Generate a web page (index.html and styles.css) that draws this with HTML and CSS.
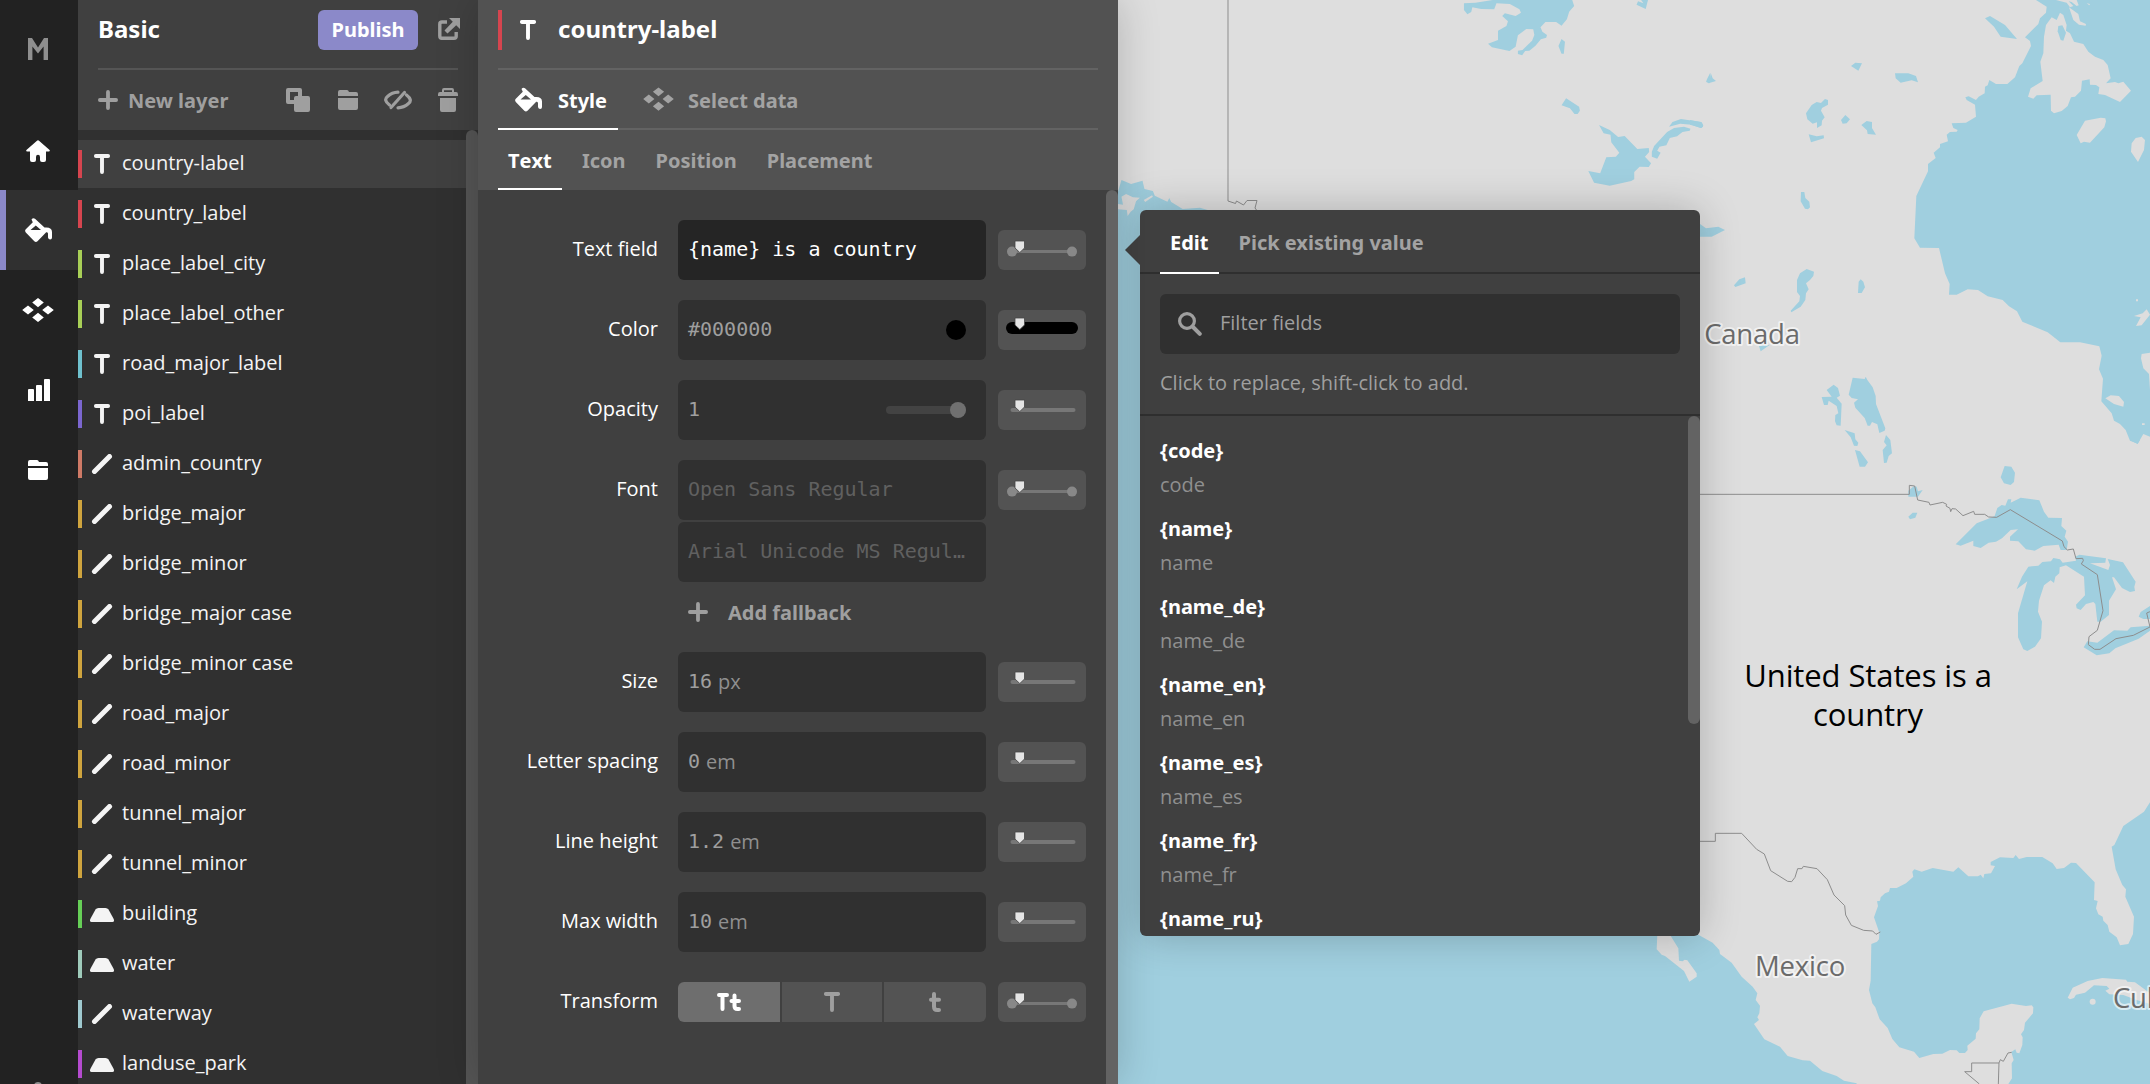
FILE: index.html
```html
<!DOCTYPE html>
<html lang="en">
<head>
<meta charset="utf-8">
<title>Basic – style editor</title>
<link rel="stylesheet" href="styles.css">
</head>
<body>
<svg class="defs" width="0" height="0" aria-hidden="true">
  <symbol id="i-home" viewBox="0 0 24 22"><path d="M12 0.2Q12.600.2 13.300.9L23.300 9.700q1.300 1.500-.5 1.800H20V20q0 2-2 2H16q-2 0-2-2V17q0-2.200-2-2.200t-2 2.200v3q0 2-2 2H6q-2 0-2-2V11.500H1.200q-1.800-.3-.5-1.800L10.700.9Q11.400.2 12 .2Z"/></symbol>
  <symbol id="i-bucket" viewBox="0 0 27 24"><path fill-rule="evenodd" d="M6.500 1.500Q8-.5 10 .8L19.500 9.500Q27 8.700 27 14V19.500q0 2-1.800 2T23 19.500V15.500q-.4-1.500-1.800-1.200L12.500 23.200q-1.600 1.500-3.200 0L.8 14.500Q-.6 12.800.8 11.200L7.800 4.300ZM10.800 7.500 5.500 12H16Z"/></symbol>
  <symbol id="i-data" viewBox="0 0 32 24"><path d="m16 0 5.800 4.600L16 9.200 10.200 4.600ZM6 7.400 11.800 12 6 16.600.2 12ZM26 7.400 31.800 12 26 16.600 20.200 12ZM16 14.800l5.800 4.600L16 24l-5.800-4.600Z"/></symbol>
  <symbol id="i-chart" viewBox="0 0 22 22"><path d="M1 10h4q1 0 1 1V22H0V11q0-1 1-1ZM9 6h4q1 0 1 1V22H8V7q0-1 1-1ZM17 0h4q1 0 1 1V22H16V1q0-1 1-1Z"/></symbol>
  <symbol id="i-folder" viewBox="0 0 20 20"><path d="M0 6V2Q0 0 2 0H9q1.300 0 2 1.900H18q2 0 2 2V6ZM0 8H20V18q0 2-2 2H2q-2 0-2-2Z"/></symbol>
  <symbol id="i-plus" viewBox="0 0 20 20"><path d="M10 1.900V18.100M1.900 10H18.100" stroke="currentColor" stroke-width="3.800" stroke-linecap="round"/></symbol>
  <symbol id="i-copy" viewBox="0 0 24 24"><path fill-rule="evenodd" d="M2 0H14q2 0 2 2V8H12V4H4V12H8v4H2q-2 0-2-2V2Q0 0 2 0ZM10 8H22q2 0 2 2V22q0 2-2 2H10q-2 0-2-2V10Q8 8 10 8Z"/></symbol>
  <symbol id="i-hide" viewBox="0 0 28 20"><g fill="none" stroke="currentColor" stroke-width="3.200" stroke-linecap="round"><path d="M5.500 15Q-1 10 3.500 6.500 8 2.400 14 2.200"/><path d="M22.500 5Q29 10 24.500 13.500 20 17.600 14 17.800"/><path d="M7 17.500 20.500 2.500"/></g></symbol>
  <symbol id="i-trash" viewBox="0 0 20 24"><path fill-rule="evenodd" d="M6 0H14q2 0 2 2V4h2q2 0 2 2.200V8H0V6.200Q0 4 2 4H4V2Q4 0 6 0ZM6 2.200V4h8V2.200ZM2 10H18V22q0 2-2 2H4q-2 0-2-2Z"/></symbol>
  <symbol id="i-share" viewBox="0 0 22 22"><path d="M9 4H4Q1.800 4 1.800 6V18q0 2.200 2 2.200H16q2.200 0 2.200-2V14" fill="none" stroke="currentColor" stroke-width="3.400"/><path d="M11 0H22V11L18.200 7.200 9.500 15.500 6.500 12.500 14.800 3.800Z"/></symbol>
  <symbol id="i-type" viewBox="0 0 16 20"><path d="M1.900 2H14.100M8 2V18" stroke="currentColor" stroke-width="3.900" stroke-linecap="round"/></symbol>
  <symbol id="i-line" viewBox="0 0 20 20"><path d="M2.500 17.500 17.500 2.500" stroke="currentColor" stroke-width="5" stroke-linecap="round"/></symbol>
  <symbol id="i-fill" viewBox="0 0 24 14"><path d="M8.500 0h7q2 0 3 1.500l5.200 9.500q1 2.700-1.200 3H1.500q-2.200-.3-1.200-3l5.200-9.500q1-1.500 3-1.500Z"/></symbol>
  <symbol id="i-search" viewBox="0 0 24 24"><g fill="none" stroke="currentColor" stroke-width="3.200" stroke-linecap="round"><circle cx="9" cy="9" r="7.400"/><path d="m14.500 14.500 7.300 7.300" stroke-width="4"/></g></symbol>
  <symbol id="i-lower" viewBox="0 0 12 20"><path d="M5 2V14.500q0 3.500 3.200 3.500H10M2 7.800H10" fill="none" stroke="currentColor" stroke-width="4" stroke-linecap="round"/></symbol>
  <symbol id="i-mixed" viewBox="0 0 24 18"><path d="M2 2H10M5.500 2V16M17.500 2.500V13q0 3 3 3H22M14.500 8H22" fill="none" stroke="currentColor" stroke-width="4" stroke-linecap="round"/></symbol>
  <symbol id="i-logo" viewBox="0 0 20 22"><path d="M0 22V0H4L10 9.500 16 0H20V22H15.600V8.500L10 15.500 4.400 8.500V22Z"/></symbol>
  <symbol id="z-line" viewBox="0 0 88 40"><rect x="12.500" y="18" width="65" height="4" rx="2" fill="#777"/><path d="M17 10H26.500V17L21.800 21.500 17 17Z" fill="#e4e4e4" stroke="#444" stroke-width=".8"/></symbol>
  <symbol id="z-stops" viewBox="0 0 88 40"><rect x="14" y="20" width="60" height="3" fill="#777"/><circle cx="14" cy="21.600" r="5" fill="#888"/><circle cx="74" cy="21.600" r="5" fill="#888"/><path d="M17 11H26.500V18L21.800 22.500 17 18Z" fill="#e4e4e4" stroke="#444" stroke-width=".8"/></symbol>
  <symbol id="z-color" viewBox="0 0 88 40"><rect x="8" y="12" width="72" height="12" rx="6" fill="#000"/><path d="M17 8H26.500V15L21.800 19.500 17 15Z" fill="#e4e4e4" stroke="#444" stroke-width=".8"/></symbol>
</svg>

<div class="app">
  <nav class="rail">
    <a class="rail-item logo"><svg width="20" height="22"><use href="#i-logo"/></svg></a>
    <a class="rail-item home"><svg width="24" height="22"><use href="#i-home"/></svg></a>
    <a class="rail-item active"><svg width="27" height="24"><use href="#i-bucket"/></svg></a>
    <a class="rail-item"><svg width="32" height="24"><use href="#i-data"/></svg></a>
    <a class="rail-item chart"><svg width="22" height="22"><use href="#i-chart"/></svg></a>
    <a class="rail-item"><svg width="20" height="20"><use href="#i-folder"/></svg></a>
    <span class="rail-dot"></span>
  </nav>

  <section class="layers">
    <header class="layers-head">
      <div class="title-row">
        <h1>Basic</h1>
        <button class="publish">Publish</button>
        <svg class="muted" width="22" height="22"><use href="#i-share"/></svg>
      </div>
      <div class="tools muted">
        <svg width="20" height="20"><use href="#i-plus"/></svg>
        <span class="new-layer">New layer</span>
        <svg class="t-copy" width="24" height="24"><use href="#i-copy"/></svg>
        <svg class="t-folder" width="20" height="20"><use href="#i-folder"/></svg>
        <svg class="t-hide" width="28" height="20"><use href="#i-hide"/></svg>
        <svg width="20" height="24"><use href="#i-trash"/></svg>
      </div>
    </header>
    <div class="layers-body">
      <ul class="layer-list">
        <li class="selected red"><svg><use href="#i-type"/></svg>country-label</li>
        <li class="red"><svg><use href="#i-type"/></svg>country_label</li>
        <li class="lime"><svg><use href="#i-type"/></svg>place_label_city</li>
        <li class="lime"><svg><use href="#i-type"/></svg>place_label_other</li>
        <li class="cyan"><svg><use href="#i-type"/></svg>road_major_label</li>
        <li class="violet"><svg><use href="#i-type"/></svg>poi_label</li>
        <li class="coral"><svg><use href="#i-line"/></svg>admin_country</li>
        <li class="gold"><svg><use href="#i-line"/></svg>bridge_major</li>
        <li class="gold"><svg><use href="#i-line"/></svg>bridge_minor</li>
        <li class="gold"><svg><use href="#i-line"/></svg>bridge_major case</li>
        <li class="gold"><svg><use href="#i-line"/></svg>bridge_minor case</li>
        <li class="gold"><svg><use href="#i-line"/></svg>road_major</li>
        <li class="gold"><svg><use href="#i-line"/></svg>road_minor</li>
        <li class="gold"><svg><use href="#i-line"/></svg>tunnel_major</li>
        <li class="gold"><svg><use href="#i-line"/></svg>tunnel_minor</li>
        <li class="green"><svg class="fill"><use href="#i-fill"/></svg>building</li>
        <li class="mint"><svg class="fill"><use href="#i-fill"/></svg>water</li>
        <li class="sky"><svg><use href="#i-line"/></svg>waterway</li>
        <li class="magenta"><svg class="fill"><use href="#i-fill"/></svg>landuse_park</li>
      </ul>
      <div class="scrollbar"></div>
    </div>
  </section>

  <section class="props">
    <header class="props-head">
      <div class="props-title">
        <svg width="16" height="20"><use href="#i-type"/></svg>
        <h2>country-label</h2>
      </div>
      <div class="tabs main-tabs">
        <a class="tab on"><span class="tab-icon"><svg width="27" height="25"><use href="#i-bucket"/></svg></span>Style</a>
        <a class="tab"><span class="tab-icon"><svg width="31" height="24"><use href="#i-data"/></svg></span>Select data</a>
      </div>
      <div class="tabs sub-tabs">
        <a class="tab on">Text</a>
        <a class="tab">Icon</a>
        <a class="tab">Position</a>
        <a class="tab">Placement</a>
      </div>
    </header>
    <div class="props-body">
      <div class="form">
        <div class="row"><label>Text field</label><div class="input focus">{name} is a country</div><span class="zoomer"><svg><use href="#z-stops"/></svg></span></div>
        <div class="row"><label>Color</label><div class="input">#000000<i class="swatch"></i></div><span class="zoomer"><svg><use href="#z-color"/></svg></span></div>
        <div class="row"><label>Opacity</label><div class="input">1<i class="slider"><b></b></i></div><span class="zoomer"><svg><use href="#z-line"/></svg></span></div>
        <div class="row tall"><label>Font</label>
          <div class="stack">
            <div class="input dim">Open Sans Regular</div>
            <div class="input dim">Arial Unicode MS Regul…</div>
            <div class="fallback"><svg width="20" height="20"><use href="#i-plus"/></svg>Add fallback</div>
          </div>
          <span class="zoomer"><svg><use href="#z-stops"/></svg></span></div>
        <div class="row"><label>Size</label><div class="input">16<em>px</em></div><span class="zoomer"><svg><use href="#z-line"/></svg></span></div>
        <div class="row"><label>Letter spacing</label><div class="input">0<em>em</em></div><span class="zoomer"><svg><use href="#z-line"/></svg></span></div>
        <div class="row"><label>Line height</label><div class="input">1.2<em>em</em></div><span class="zoomer"><svg><use href="#z-line"/></svg></span></div>
        <div class="row"><label>Max width</label><div class="input">10<em>em</em></div><span class="zoomer"><svg><use href="#z-line"/></svg></span></div>
        <div class="row"><label>Transform</label>
          <div class="segments">
            <button class="on"><svg width="24" height="18"><use href="#i-mixed"/></svg></button>
            <button><svg width="16" height="20"><use href="#i-type"/></svg></button>
            <button><svg width="12" height="20"><use href="#i-lower"/></svg></button>
          </div>
          <span class="zoomer"><svg><use href="#z-stops"/></svg></span></div>
      </div>
      <div class="scrollbar light"></div>
    </div>
  </section>

  <main class="map">
    <svg class="map-canvas" viewBox="1118 0 1032 1084" width="1032" height="1084">
      <rect x="1118" y="0" width="1032" height="1084" fill="#dedede"/>
      <!-- northern lakes and Pacific coast -->
      <g transform="translate(1110 0) scale(.38265 .33333)">
        <g class="water">
          <path d="M925 10 955 8 1000 0H1208L1213 18 1200 35 1194 58 1180 77 1166 66H1138L1125 82 1130 95 1142 105 1140 113 1126 118 1112 137 1096 152 1085 153 1077 166 1066 162V152L1078 150 1092 134 1103 122 1109 105 1106 88 1088 87 1066 106 1060 140 1044 153 998 142 988 131 1014 120V92L1036 78 1040 64 1025 48 1032 40 1060 48 1074 38 1070 28 1045 12 1010 10 1004 28 970 27 947 22 944 36 934 43 925 30Z"/>
          <path d="M1180 117 1189 125 1186 161H1180L1172 138ZM1388 0H1406L1400 27 1376 14 1380 4 1394 10ZM1192 295 1226 320 1228 332 1222 342H1214L1202 325 1180 316Z"/>
          <path d="M1278 375 1306 390 1328 411 1345 408 1378 447 1408 444 1409 456 1398 470 1414 490 1408 501 1384 500 1370 516V538L1362 543 1306 557 1265 548 1250 513 1281 520 1297 472 1322 470 1331 458 1310 427 1308 404 1290 400Z"/>
          <path d="M1461 380 1470 366 1492 357 1545 366 1550 380 1543 384 1520 374 1490 371ZM1416 455 1422 438 1456 396 1474 384 1500 380 1517 386 1515 392 1496 396 1482 409 1463 414 1454 436 1436 440 1430 452 1439 458 1430 476 1416 470ZM1568 220 1560 238 1558 246 1568 250Z"/>
          <path d="M21 575 30 540 55 552 85 542 90 567 112 573 117 587 150 605 155 594 160 606 190 627 235 623 262 632H300L900 1100 1200 1900 1500 2200V2800L21 2900Z"/>
        </g>
        <path class="land" d="M30 590 42 582 60 592 78 593 68 604 62 628 54 635 46 648 44 630 21 628V612L34 614ZM88 600 110 586 112 590 92 606Z"/>
      </g>
      <!-- Hudson Bay and central lakes -->
      <g transform="translate(1690 0) scale(.33333)">
        <g class="water">
          <path d="M1038 0 1070 20 1068 38 1050 55 1045 72 1005 112 1020 123 1023 138 997 190 988 198 975 232 952 252H918L898 240 893 256 885 260 884 280 866 290 858 300 836 289 826 292 830 300 855 314 858 350 828 368 785 370 790 384 803 390 800 395 780 396 770 404 774 424 750 432V442L731 458 737 474 714 492V514L679 588 673 715 690 743 747 744 765 820 779 852 777 884H800L833 868 864 870 893 889 938 900 957 919 981 934 997 965 1073 997 1111 1027H1170L1228 1039 1235 1067 1227 1108 1239 1136 1234 1204 1265 1240 1272 1262 1290 1272 1307 1290 1320 1322 1343 1331 1360 1302 1380 1310V0Z"/>
          <path d="M885 55 900 48 945 75 981 117 932 110 912 80ZM483 198 496 188 516 190 505 212ZM615 220H655L678 228 684 247 665 241 632 248 617 235ZM62 218 68 235 78 243 55 250 49 243 60 235ZM0 360 35 367 40 376 35 384 0 374Z"/>
          <path d="M348 340 365 315 380 306 393 309 405 297 414 300V314L396 324 393 332 404 352 396 362 395 376 381 384V367L368 371 352 358ZM453 360 466 345 480 358 470 370 458 371ZM514 375 530 363 546 366V384L558 404 533 402 531 391ZM356 403 380 409 401 406 402 415 363 427ZM333 576H343L346 594 358 605 360 622 354 628 345 626 332 604ZM30 672 48 685 85 680 105 690 65 710H0ZM132 856 148 838 165 832 167 850 136 861Z"/>
          <path d="M350 807 372 815 370 828 360 840 348 850 356 868 348 880 346 900 332 920 304 937 302 932 328 904 330 888 321 876V840L330 820ZM512 838 520 845 525 862 515 879H504L506 845ZM207 1038 240 1034 212 1054Z"/>
          <path d="M488 1133 524 1137 527 1130 532 1140 548 1162 557 1188 558 1212 586 1285 584 1292 568 1299 562 1273 546 1266 540 1277H533L524 1254 496 1223 492 1208 504 1198 485 1194 476 1184ZM410 1170 431 1154 444 1164 450 1187 440 1193 455 1211 452 1277 440 1276 435 1264 436 1245 445 1240 440 1218 416 1202 413 1215H402L395 1191 425 1190ZM464 1290 494 1300 496 1318 505 1328 502 1338 492 1337 482 1312ZM495 1350 510 1354 534 1387 525 1400H509ZM588 1305 601 1320 606 1360 596 1368 590 1388 582 1389 578 1350 590 1336 582 1326Z"/>
        </g>
        <g class="land">
          <path d="M1085 52 1100 60 1110 38 1120 45 1130 75 1128 92 1140 100 1152 125 1180 132 1195 155 1215 170 1240 180 1253 195 1262 235 1248 250 1275 246 1285 250 1300 245 1323 272 1290 306 1245 285 1225 282 1228 262 1218 255 1200 254 1199 238 1176 242 1173 272 1155 290 1143 292 1133 318 1115 333 1092 340 1083 332 1082 284 1040 286 1030 296 1014 290 1022 265 1058 243 1051 185 1060 160 1062 110 1068 75Z"/>
          <path d="M1098 0 1130 8 1140 22 1150 18 1136 4 1145 6 1160 18 1166 16 1160 0ZM1137 22 1165 42 1170 64 1188 72 1187 77 1167 74 1150 60ZM1190 10 1200 12 1198 16Z"/>
          <path d="M1185 362 1232 353 1246 355 1248 364 1243 382 1200 428 1182 425 1172 430 1160 405ZM1337 414 1355 410 1365 420 1362 450 1344 486 1323 455 1325 430ZM1370 928 1380 944 1355 976 1338 978 1352 952 1332 948 1358 940ZM1338 898h6v6h-6ZM1380 1058 1355 1062 1353 1075 1360 1105 1377 1122 1380 1170ZM1246 1195 1262 1186 1287 1188 1302 1206 1300 1220 1272 1212ZM1356 1270h8v5h-8Z"/>
        </g>
        <path class="water" d="M1105 78 1117 76 1128 98 1120 122 1112 120 1103 94Z"/>
      </g>
      <!-- Great Lakes -->
      <g transform="translate(1690 440) scale(.33333)">
        <g class="water">
          <path d="M944 78 964 80 975 98 972 126 962 135 942 130 932 112ZM655 152 672 138 680 140 684 154 698 150 684 170 655 170ZM655 230 668 218 682 218 676 233 660 238ZM1320 0H1350L1343 12Z"/>
          <path d="M797 313 860 250 895 236 914 228 922 204 935 195 946 197 954 178 964 178 962 188 992 173 1048 181 1062 215 1075 233 1116 234 1114 258 1129 272 1124 290 1134 305 1130 330H1112L1106 314 1060 318 1034 332 1008 328 985 304 960 302V290L984 268 962 270 936 295 918 305 896 308 872 324 850 318V302L812 317Z"/>
          <path d="M980 448 996 410 1015 380 1045 377 1057 366 1083 364 1090 354 1110 358 1118 368 1158 362 1156 350 1168 344 1248 355 1246 368 1200 370 1255 390 1260 375 1253 357 1299 367 1337 425 1333 440 1335 453 1320 456 1296 444 1272 412H1266L1278 448 1257 482V525L1232 545H1222L1216 492 1210 486 1188 492 1172 510 1160 505 1158 494 1185 466 1182 410 1128 376 1109 382 1108 400 1096 410 1092 429 1082 421 1062 436 1047 482 1044 515 1056 545 1053 595 1035 620 1012 633 1000 628 984 592V520L1012 424Z"/>
          <path d="M1181 622 1192 604 1222 608 1272 571 1312 572 1322 562 1380 557V572L1346 596 1276 625 1258 640 1220 646ZM1380 498 1352 516 1346 530 1360 537H1380Z"/>
        </g>
        <path class="border" d="M0 163H658V136L674 138 683 180 717 187 720 195 758 187 770 193 768 198 780 205 782 215 786 206 797 207 819 227 851 214 854 223H884L896 231 920 232 961 209 1117 303 1122 320 1132 330 1150 327 1158 356 1178 355 1180 362 1174 372 1222 404 1239 512 1222 571 1197 590 1195 614 1214 628H1230L1278 596 1330 586 1380 561 1370 519 1380 515"/>
      </g>
      <!-- Mexico, Gulf, Caribbean -->
      <g transform="translate(1640 800) scale(.33333)">
        <g class="water">
          <path d="M1530 7 1512 35 1450 78 1423 135 1415 140 1427 208 1447 255 1458 268 1456 290 1482 350 1479 402 1465 432 1440 436 1430 412 1408 395 1403 375 1390 362 1388 350 1375 343 1368 325 1373 303 1362 300 1364 247 1308 189 1293 188 1272 204 1250 207 1238 190 1207 171H1160L1137 177 1127 165 1120 174 1080 172 1052 186V196L1065 198 1053 220 1033 222 1030 235 1022 224 1014 229H985L955 202 940 215 878 204 845 215 823 208 817 215 820 230 798 250 770 264H750L747 275 735 280 722 292 720 302 711 304 714 318 702 352 718 398 717 418 711 425 694 432 692 542 687 570 697 610 706 622 719 658 743 684 757 717 778 742 822 755 838 774 880 762 907 761 930 750 950 751 958 759H975L983 750 982 737 1007 716 1008 700 1018 688 1019 655 1031 634 1115 611 1158 618 1175 616 1180 622 1179 640 1155 668 1152 690 1143 703 1148 712 1147 735 1138 760 1130 758 1126 748 1114 756 1121 780 1115 790 1116 835 1105 852H1530Z"/>
          <path d="M100 370 175 404 218 428 238 450 240 462 275 488 305 530 338 560 352 580 347 600 360 617 358 640 352 652 357 660 342 672 373 718 420 740 443 768 488 781 510 782 547 813 590 828 612 842 650 850V852H-1570V370Z"/>
        </g>
        <g class="land">
          <path d="M53 380H75L115 445 117 482 128 484 134 479 142 481 170 520V530L148 545 132 513 75 468 65 464 50 448Z"/>
          <path d="M1283 593 1298 563 1343 543 1387 534 1458 539 1462 545 1485 547 1530 580V612L1490 600 1450 585 1408 583 1396 572 1408 566 1400 558 1362 556 1335 578 1308 584 1302 594 1290 598Z"/>
          <circle cx="1358" cy="605" r="9"/>
        </g>
        <path class="border" d="M150 124H226V100H305L350 148 373 162 392 212 443 244 455 245 465 232 473 206H486L490 199 531 206 562 239 582 285 614 317 617 345 634 376 671 391 698 393 708 403 721 396M1115 757 1104 759 1090 784 1081 779 1077 789H995V815H974L1018 852M1077 789 1075 852"/>
      </g>
      <path class="border" d="M1228 0V201L1235.500 203.500 1236.500 201 1243.500 205 1247 200.500H1257L1255 208 1258 212"/>
      <g class="place">
        <text x="1752" y="344">Canada</text>
        <text x="1800" y="976">Mexico</text>
        <text class="left" x="2113" y="1008">Cuba</text>
      </g>
      <g class="country"><text x="1868" y="687">United States is a</text><text x="1868" y="725.500">country</text></g>
    </svg>

    <aside class="popup">
      <div class="tabs popup-tabs">
        <a class="tab on">Edit</a>
        <a class="tab">Pick existing value</a>
      </div>
      <div class="popup-search">
        <div class="search"><svg width="24" height="24"><use href="#i-search"/></svg>Filter fields</div>
        <p>Click to replace, shift-click to add.</p>
      </div>
      <div class="popup-body">
        <dl>
          <dt>{code}</dt><dd>code</dd>
          <dt>{name}</dt><dd>name</dd>
          <dt>{name_de}</dt><dd>name_de</dd>
          <dt>{name_en}</dt><dd>name_en</dd>
          <dt>{name_es}</dt><dd>name_es</dd>
          <dt>{name_fr}</dt><dd>name_fr</dd>
          <dt>{name_ru}</dt>
        </dl>
        <div class="scrollbar light short"></div>
      </div>
    </aside>
  </main>
</div>
</body>
</html>
```
FILE: styles.css
```css
* { box-sizing: border-box; margin: 0; padding: 0; }

body {
  width: 2150px;
  height: 1084px;
  overflow: hidden;
  font: 20px/28px "Open Sans", "Noto Sans", sans-serif;
  color: #fff;
}

svg { display: block; flex: none; fill: currentColor; }
.defs { position: absolute; }
button { font: inherit; color: inherit; border: 0; }
h1, h2, .publish, .new-layer, .tabs, .fallback, dt { font-family: "Noto Sans", "Open Sans", sans-serif; font-weight: 700; }
.muted { color: #9f9f9f; }

.app { display: flex; height: 1084px; }

/* navigation rail */
.rail { width: 78px; background: #222; display: flex; flex-direction: column; overflow: hidden; }
.rail-item { flex: none; height: 80px; display: flex; align-items: center; justify-content: center; padding: 0 2px 0 0; }
.rail-item.home { padding-top: 2px; }
.rail-item.chart { padding: 0; }
.rail-item.logo { height: 110px; padding-bottom: 12px; color: #8f8f8f; }
.rail-item.active { background: #303030; border-left: 6px solid #8b89c9; padding-right: 7px; }
.rail-dot { width: 8px; height: 8px; margin: 572px 0 0 34px; border-radius: 50%; background: #8f8f8f; flex: none; }

/* scrollbars */
.scrollbar { width: 12px; flex: none; background: #555; border-radius: 6px 6px 0 0; }
.scrollbar.light { background: #636363; }
.scrollbar.short { height: 308px; border-radius: 6px; }

/* layer list */
.layers { width: 400px; display: flex; flex-direction: column; background: #404040; }
.layers-head { height: 130px; padding: 0 20px; }
.title-row { height: 70px; padding: 10px 0 18px; border-bottom: 2px solid #555; display: flex; align-items: center; }
.title-row h1 { font-size: 24px; flex: 1; padding-bottom: 3px; }
.title-row svg { margin: -2px -2px 0 20px; }
.publish { width: 100px; height: 40px; border-radius: 6px; background: #8b89c9; }
.tools { height: 60px; display: flex; align-items: center; }
.new-layer { flex: 1; margin-left: 10px; padding-top: 1px; }
.t-copy { margin-right: 28px; }
.t-folder { margin-right: 26px; }
.t-hide { margin-right: 26px; }
.layers-body { flex: 1; min-height: 0; display: flex; background: #303030; }
.layer-list { flex: 1; list-style: none; padding-top: 10px; display: flex; flex-direction: column; gap: 2px; overflow: hidden; }
.layer-list li {
  flex: none;
  height: 48px;
  padding-bottom: 3px;
  display: flex;
  align-items: center;
  gap: 8px;
  background: linear-gradient(var(--tag), var(--tag)) 0 10px / 4px 28px no-repeat;
  color: #f4f4f4;
}
.layer-list li.selected { background-color: #404040; }
.layer-list svg { width: 24px; height: 20px; margin: 3px 0 0 12px; }
.layer-list svg.fill { height: 14px; margin-top: 4px; }
.red { --tag: #d6454f; }
.lime { --tag: #a8cf57; }
.cyan { --tag: #6fc1ce; }
.violet { --tag: #7b66cf; }
.coral { --tag: #cf7a66; }
.gold { --tag: #cfa43e; }
.green { --tag: #66cf57; }
.mint { --tag: #9fcbbb; }
.sky { --tag: #9fc9cf; }
.magenta { --tag: #b54bcf; }

/* property panel */
.props { width: 640px; display: flex; flex-direction: column; background: #404040; position: relative; z-index: 1; box-shadow: 0 0 40px rgba(0, 0, 0, .2); }
.props-head { height: 190px; padding: 0 20px; background: #525252; }
.props-title { height: 70px; padding: 10px 0 18px; border-bottom: 2px solid #636363; display: flex; align-items: stretch; }
.props-title::before { content: ""; width: 4px; background: #d6454f; }
.props-title svg { align-self: center; margin: 0 22px 0 18px; }
.props-title h2 { font-size: 24px; line-height: 37px; }
.tabs { display: flex; gap: 10px; height: 60px; }
.tab { display: flex; align-items: center; padding: 3px 10px 0; color: #a3a3a3; border-bottom: 2px solid transparent; line-height: 28px; }
.tab.on { color: #fff; border-color: #fff; }
.tab-icon { width: 40px; margin: -3px 10px 0 0; display: flex; justify-content: center; }
.main-tabs { background: linear-gradient(#636363, #636363) 0 100% / 100% 2px no-repeat; }
.main-tabs .on { width: 120px; }
.sub-tabs .on { width: 64px; font-kerning: none; }
.props-body { flex: 1; min-height: 0; display: flex; }
.form { flex: 1; padding: 30px 0 0 20px; display: flex; flex-direction: column; gap: 20px; }
.row { height: 60px; display: flex; align-items: flex-start; }
.row.tall { height: 172px; }
label { width: 160px; margin-right: 20px; line-height: 57px; text-align: right; }
.input {
  width: 308px;
  height: 60px;
  padding: 0 20px 2px 10px;
  border-radius: 6px;
  background: #303030;
  color: #9f9f9f;
  font-family: "DejaVu Sans Mono", monospace;
  display: flex;
  align-items: center;
  white-space: nowrap;
}
.input.focus { background: #252525; color: #fff; }
.input.dim { color: #606060; }
.input em { font: 20px "Open Sans", sans-serif; margin-left: 6px; color: #8f8f8f; }
.swatch { width: 20px; height: 20px; margin: 2px 0 0 auto; border-radius: 50%; background: #000; }
.slider { width: 80px; height: 8px; margin: 2px 0 0 auto; border-radius: 4px; background: #434343; display: flex; align-items: center; justify-content: flex-end; }
.slider b { width: 16px; height: 16px; border-radius: 50%; background: #707070; }
.stack { display: flex; flex-direction: column; gap: 2px; }
.fallback { height: 56px; padding: 2px 10px 0; display: flex; align-items: center; gap: 20px; color: #9f9f9f; }
.fallback svg { margin-top: -2px; }
.zoomer { width: 88px; height: 40px; margin: 10px 0 0 12px; border-radius: 6px; background: #535353; }
.zoomer svg { width: 88px; height: 40px; }
.segments { width: 308px; height: 40px; margin-top: 10px; display: grid; grid-template-columns: 102px 100px 102px; gap: 2px; border-radius: 6px; overflow: hidden; }
.segments button { display: flex; align-items: center; justify-content: center; background: #535353; color: #9f9f9f; }
.segments .on { background: #6e6e6e; color: #fff; }

/* map */
.map { flex: 1; position: relative; }
.water { fill: #a0cfdf; }
.land { fill: #dedede; }
.border { fill: none; stroke: #8d8d8d; stroke-width: 1px; vector-effect: non-scaling-stroke; stroke-linejoin: round; }
.place text { font: 27.5px "Open Sans", sans-serif; letter-spacing: -.2px; fill: #6b6b6b; text-anchor: middle; stroke: rgba(255, 255, 255, .6); stroke-width: 4px; stroke-linejoin: round; paint-order: stroke; }
.place .left { text-anchor: start; }
.country text { font: 31px "Open Sans", sans-serif; letter-spacing: -.1px; fill: #000; text-anchor: middle; }

/* field popup, floating over the map */
.popup { position: absolute; left: 22px; top: 210px; width: 560px; height: 726px; display: flex; flex-direction: column; background: #404040; border-radius: 6px; box-shadow: 0 0 40px rgba(0, 0, 0, .22); }
.popup::before { content: ""; position: absolute; left: -15.500px; top: 24px; border: solid transparent; border-width: 16px 16px 16px 0; border-right-color: #404040; }
.popup-tabs { height: 64px; padding: 0 20px; background: linear-gradient(#2f2f2f, #2f2f2f) 0 100% / 100% 2px no-repeat; }
.popup-search { height: 142px; padding: 20px; border-bottom: 2px solid #2f2f2f; color: #9f9f9f; }
.search { height: 60px; padding: 0 18px 3px; border-radius: 6px; background: #303030; display: flex; align-items: center; gap: 18px; }
.search svg { margin-top: 3px; }
.popup-search p { margin-top: 15px; }
.popup-body { flex: 1; min-height: 0; display: flex; overflow: hidden; border-radius: 0 0 6px 6px; }
dl { flex: 1; padding: 18px 20px 0; }
dt { line-height: 34px; }
dd { color: #8f8f8f; line-height: 34px; margin-bottom: 10px; }
```
